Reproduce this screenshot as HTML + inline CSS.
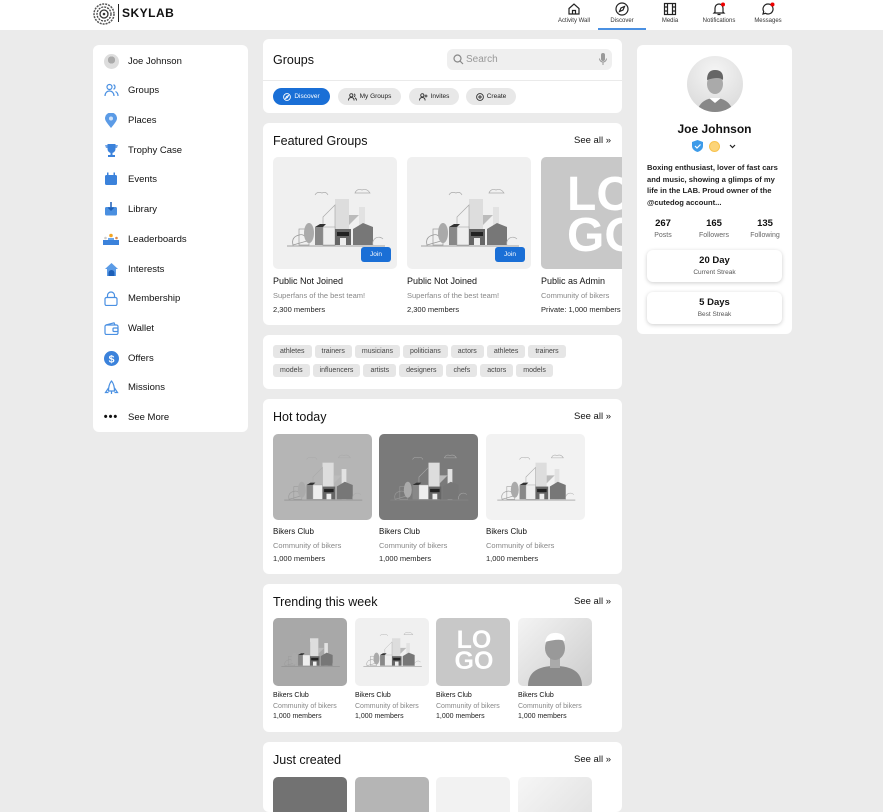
<!DOCTYPE html>
<html><head><meta charset="utf-8"><style>
*{box-sizing:border-box;margin:0;padding:0}
body{width:883px;height:795px;overflow:hidden;background:#ebebeb;font-family:"Liberation Sans",sans-serif;color:#111;position:relative}
.abs{position:absolute}
.card{position:absolute;background:#fff;border-radius:6px}
.hdr{position:absolute;left:0;top:0;width:883px;height:30px;background:#fff}
.nav{position:absolute;top:2px;width:60px;text-align:center;font-size:6px;color:#333}
.nav svg{display:block;margin:0 auto 2px}
.side div.it{position:absolute;left:0;height:20px;display:flex;align-items:center;font-size:9.5px}
.side .ic{width:16px;height:16px;margin-left:10px;margin-right:9px;display:flex;align-items:center;justify-content:center}
.pill{position:absolute;top:88px;height:17px;border-radius:9px;background:#e8e8e8;font-size:6.5px;display:flex;align-items:center;justify-content:center;gap:3px;color:#222}
h2{position:absolute;font-size:12.5px;font-weight:normal;color:#111}
.see{position:absolute;right:11px;font-size:9.5px;color:#111}
.img{position:absolute;border-radius:5px;overflow:hidden}
.t1{position:absolute;font-size:9px}
.t2{position:absolute;font-size:7.5px;color:#888}
.t3{position:absolute;font-size:7.5px;color:#222}
.tag{display:inline-block;height:13px;line-height:13px;padding:0 7px;background:#e6e6e6;border-radius:3px;font-size:7px;color:#444;margin:0 3px 6px 0}
.logo{display:flex;flex-wrap:wrap;color:#fff;font-weight:bold;font-family:"Liberation Sans",sans-serif;line-height:.85}
</style></head><body>

<div class="hdr"></div>
<svg class="abs" style="left:93px;top:3px" width="22" height="22" viewBox="0 0 22 22"><circle cx="11" cy="11" r="10" fill="none" stroke="#555" stroke-width="1.5" stroke-dasharray="2 1"/><circle cx="11" cy="11" r="7" fill="none" stroke="#444" stroke-width="1.3" stroke-dasharray="2 1"/><circle cx="11" cy="11" r="4" fill="none" stroke="#333" stroke-width="1.3"/><circle cx="11" cy="11" r="1.3" fill="#333"/></svg>
<div class="abs" style="left:118px;top:4px;width:1px;height:18px;background:#222"></div>
<div class="abs" style="left:122px;top:6px;font-size:12px;font-weight:bold;letter-spacing:.5px">SKYLAB</div>

<div class="nav" style="left:544px"><svg width="14" height="14" viewBox="0 0 14 14" fill="none" stroke="#222" stroke-width="1.2"><path d="M2 6.5L7 2l5 4.5V12H2z"/><path d="M5.5 12V8.5h3V12"/></svg>Activity Wall</div>
<div class="nav" style="left:592px"><svg width="14" height="14" viewBox="0 0 14 14" fill="none" stroke="#222" stroke-width="1.2"><circle cx="7" cy="7" r="6"/><path d="M9.5 4.5L8 8 4.5 9.5 6 6z"/></svg>Discover</div>
<div class="abs" style="left:598px;top:28px;width:48px;height:2px;background:#4a90e2"></div>
<div class="nav" style="left:640px"><svg width="14" height="14" viewBox="0 0 14 14" fill="none" stroke="#222" stroke-width="1.2"><rect x="1.5" y="1.5" width="11" height="11"/><path d="M4.5 1.5v11M9.5 1.5v11M1.5 5h3M1.5 9h3M9.5 5h3M9.5 9h3"/></svg>Media</div>
<div class="nav" style="left:689px"><svg width="14" height="14" viewBox="0 0 14 14" fill="none" stroke="#222" stroke-width="1.2"><path d="M3 10V6a4 4 0 018 0v4l1 1H2z"/><path d="M5.5 12.5h3"/><circle cx="11" cy="2.5" r="2" fill="#e00" stroke="none"/></svg>Notifications</div>
<div class="nav" style="left:738px"><svg width="14" height="14" viewBox="0 0 14 14" fill="none" stroke="#222" stroke-width="1.2"><path d="M7 2a5 5 0 11-2.5 9.3L2 12l.7-2.5A5 5 0 017 2z"/><circle cx="11.5" cy="2.5" r="2" fill="#e00" stroke="none"/></svg>Messages</div>

<!-- left sidebar -->
<div class="card side" style="left:93px;top:45px;width:155px;height:387px">
<div class="it" style="top:6px"><span class="ic"><span style="width:15px;height:15px;border-radius:50%;background:radial-gradient(circle at 50% 40%,#aaa 30%,#ddd 32%)"></span></span>Joe Johnson</div>
<div class="it" style="top:35px"><span class="ic"><svg width="15" height="14" viewBox="0 0 15 14" fill="none" stroke="#4a90e2" stroke-width="1.2"><circle cx="5.5" cy="4" r="2.5"/><path d="M1 13c0-3 2-5 4.5-5s4.5 2 4.5 5"/><path d="M9.5 1.7a2.5 2.5 0 010 4.6M11.5 8.5c1.5.7 2.5 2.4 2.5 4.5"/></svg></span>Groups</div>
<div class="it" style="top:65px"><span class="ic"><svg width="12" height="15" viewBox="0 0 12 15"><path d="M6 15C2 10 0 7.5 0 5.5a6 6 0 0112 0C12 7.5 10 10 6 15z" fill="#5b9be6"/><circle cx="6" cy="5.5" r="2" fill="#cfe2fa"/></svg></span>Places</div>
<div class="it" style="top:95px"><span class="ic"><svg width="15" height="15" viewBox="0 0 15 15" fill="#3b82db"><path d="M3.5 1h8v5a4 4 0 01-8 0z"/><path d="M1 2h2.5v3H2zM11.5 2H14l-1 3h-1.5z" opacity=".7"/><rect x="6.5" y="9" width="2" height="3"/><rect x="4" y="12" width="7" height="2"/></svg></span>Trophy Case</div>
<div class="it" style="top:124px"><span class="ic"><svg width="14" height="14" viewBox="0 0 14 14"><rect x="1" y="3" width="12" height="10" rx="1.5" fill="#3b82db"/><rect x="3" y="0.5" width="1.5" height="4" fill="#3b82db"/><rect x="9.5" y="0.5" width="1.5" height="4" fill="#3b82db"/></svg></span>Events</div>
<div class="it" style="top:154px"><span class="ic"><svg width="14" height="14" viewBox="0 0 14 14"><rect x="1" y="5" width="12" height="8.5" rx="1.5" fill="#4a8fe0"/><path d="M7 0v8M4.5 5.5L7 8l2.5-2.5" stroke="#1c5fb8" stroke-width="1.5" fill="none"/></svg></span>Library</div>
<div class="it" style="top:184px"><span class="ic"><svg width="16" height="12" viewBox="0 0 16 12"><rect x="0" y="7" width="16" height="5" fill="#3b82db"/><rect x="5" y="5" width="6" height="2" fill="#6aa7ef"/><circle cx="8" cy="2.5" r="1.8" fill="#f5a623"/><circle cx="2.5" cy="5" r="1.3" fill="#ccc"/><circle cx="13.5" cy="5" r="1.3" fill="#e08a4a"/></svg></span>Leaderboards</div>
<div class="it" style="top:214px"><span class="ic"><svg width="15" height="15" viewBox="0 0 15 15"><path d="M7.5 1L1 7h2v7h9V7h2z" fill="#5b9be6"/><path d="M4.5 14v-3a3 3 0 016 0v3z" fill="#1c5fb8"/></svg></span>Interests</div>
<div class="it" style="top:243px"><span class="ic"><svg width="14" height="15" viewBox="0 0 14 15" fill="none" stroke="#4a90e2" stroke-width="1.2"><rect x="1" y="6.5" width="12" height="8" rx="1.5"/><path d="M3.5 6.5V4.5a3.5 3.5 0 017 0v2"/></svg></span>Membership</div>
<div class="it" style="top:273px"><span class="ic"><svg width="15" height="13" viewBox="0 0 15 13" fill="none" stroke="#4a90e2" stroke-width="1.2"><rect x="1" y="3" width="13" height="9.5" rx="1.5"/><path d="M2 3L10 .8 11 3"/><rect x="9" y="6" width="5" height="3.5" rx="1"/></svg></span>Wallet</div>
<div class="it" style="top:303px"><span class="ic"><svg width="15" height="15" viewBox="0 0 15 15"><circle cx="7.5" cy="7.5" r="7.5" fill="#3b82db"/><text x="7.5" y="11.3" text-anchor="middle" font-size="10.5" font-weight="bold" fill="#fff" font-family="Liberation Sans">$</text></svg></span>Offers</div>
<div class="it" style="top:332px"><span class="ic"><svg width="15" height="15" viewBox="0 0 15 15" fill="none" stroke="#4a90e2" stroke-width="1.2"><path d="M7.5 1C5 4 4.5 7 4.5 11h6c0-4-.5-7-3-10z"/><path d="M4.5 8L1.5 12.5h3M10.5 8l3 4.5h-3M7.5 11v3"/></svg></span>Missions</div>
<div class="it" style="top:362px"><span class="ic" style="font-weight:bold;font-size:11px;letter-spacing:1px">•••</span>See More</div>
</div>

<!-- groups header card -->
<div class="card" style="left:263px;top:39px;width:359px;height:74px">
<div class="abs" style="left:10px;top:14px;font-size:12.5px">Groups</div>
<div class="abs" style="left:184px;top:10px;width:165px;height:21px;background:#efefef;border-radius:6px"></div>
<svg class="abs" style="left:190px;top:15px" width="11" height="11" viewBox="0 0 11 11" fill="none" stroke="#888" stroke-width="1.2"><circle cx="4.5" cy="4.5" r="3.5"/><path d="M7 7l3 3"/></svg>
<div class="abs" style="left:203px;top:15px;font-size:10px;color:#999">Search</div>
<svg class="abs" style="left:336px;top:14px" width="8" height="13" viewBox="0 0 8 13" fill="#999"><rect x="2" y="0" width="4" height="8" rx="2"/><path d="M.5 5.5a3.5 3.5 0 007 0" stroke="#999" fill="none"/><rect x="3.5" y="9" width="1" height="3"/></svg>
<div class="abs" style="left:0;top:41px;width:359px;height:1px;background:#eaeaea"></div>
</div>
<div class="pill" style="left:273px;width:57px;background:#1a6fd6;color:#fff"><svg width="8" height="8" viewBox="0 0 8 8" fill="none" stroke="#fff" stroke-width=".9"><circle cx="4" cy="4" r="3.4"/><path d="M5.5 2.5L4.5 4.5 2.5 5.5 3.5 3.5z"/></svg>Discover</div>
<div class="pill" style="left:338px;width:63px"><svg width="9" height="8" viewBox="0 0 9 8" fill="none" stroke="#333" stroke-width=".9"><circle cx="3.3" cy="2.3" r="1.6"/><path d="M.5 7.5c0-2 1.2-3 2.8-3s2.8 1 2.8 3M6 .8a1.6 1.6 0 010 3M7 4.8c1 .5 1.5 1.5 1.5 2.7"/></svg>My Groups</div>
<div class="pill" style="left:409px;width:50px"><svg width="9" height="8" viewBox="0 0 9 8" fill="none" stroke="#333" stroke-width=".9"><circle cx="3.3" cy="2.3" r="1.6"/><path d="M.5 7.5c0-2 1.2-3 2.8-3s2.8 1 2.8 3M7 1.5v3M5.5 3h3"/></svg>Invites</div>
<div class="pill" style="left:466px;width:50px"><svg width="8" height="8" viewBox="0 0 8 8" fill="none" stroke="#333" stroke-width=".9"><circle cx="4" cy="4" r="3.4"/><path d="M4 2v4M2 4h4"/></svg>Create</div>

<svg width="0" height="0" style="position:absolute"><defs>
<g id="city">
<path d="M20 88 Q18 80 26 78 Q32 76 34 84 Z" fill="none" stroke="#999" stroke-width=".8"/>
<rect x="62" y="42" width="14" height="46" fill="#ddd"/>
<path d="M50 60 L62 48 V88 H50Z" fill="none" stroke="#aaa" stroke-width=".7"/>
<rect x="86" y="50" width="6" height="38" fill="#e2e2e2"/>
<path d="M76 58h10l-10 10z" fill="#bbb"/>
<rect x="26" y="72" width="10" height="16" fill="none" stroke="#999" stroke-width=".7"/>
<ellipse cx="36" cy="76" rx="5" ry="10" fill="#aaa"/>
<rect x="42" y="70" width="8" height="18" fill="#888"/>
<path d="M42 70l5-3h6l-3 3z" fill="#333"/>
<rect x="50" y="70" width="12" height="18" fill="#eee" stroke="#999" stroke-width=".5"/>
<rect x="62" y="72" width="16" height="16" fill="#666"/>
<rect x="64" y="75" width="12" height="4" fill="#222"/>
<rect x="67" y="81" width="6" height="7" fill="#eee"/>
<path d="M80 88V72l10-6 10 4v18z" fill="#777"/>
<path d="M100 88a6 6 0 0110-6" fill="none" stroke="#aaa" stroke-width=".7"/>
<path d="M42 38q2-4 7-2q4-2 6 2" fill="none" stroke="#aaa" stroke-width=".7"/>
<path d="M82 36q2-5 7-3q5-2 8 3z" fill="none" stroke="#aaa" stroke-width=".7"/>
<line x1="14" y1="89" x2="112" y2="89" stroke="#888" stroke-width=".8"/>
</g></defs></svg>

<!-- featured -->
<div class="card" style="left:263px;top:123px;width:359px;height:202px;overflow:hidden">
<h2 style="left:10px;top:11px">Featured Groups</h2><div class="see" style="top:12px">See all »</div>
<div class="img" style="left:10px;top:34px;width:124px;height:112px;background:#f0f0f0"><svg width="124" height="112" viewBox="0 0 124 112"><use href="#city"/></svg><div class="abs" style="left:88px;top:90px;width:30px;height:15px;background:#1a6fd6;border-radius:3px;color:#fff;font-size:6.5px;text-align:center;line-height:15px">Join</div></div>
<div class="img" style="left:144px;top:34px;width:124px;height:112px;background:#f0f0f0"><svg width="124" height="112" viewBox="0 0 124 112"><use href="#city"/></svg><div class="abs" style="left:88px;top:90px;width:30px;height:15px;background:#1a6fd6;border-radius:3px;color:#fff;font-size:6.5px;text-align:center;line-height:15px">Join</div></div>
<div class="img" style="left:278px;top:34px;width:124px;height:112px;background:#c8c8c8"><div class="abs logo" style="left:26px;top:18px;width:110px;font-size:48px">LO<br>GO</div></div>
<div class="t1" style="left:10px;top:153px">Public Not Joined</div><div class="t2" style="left:10px;top:168px">Superfans of the best team!</div><div class="t3" style="left:10px;top:182px">2,300 members</div>
<div class="t1" style="left:144px;top:153px">Public Not Joined</div><div class="t2" style="left:144px;top:168px">Superfans of the best team!</div><div class="t3" style="left:144px;top:182px">2,300 members</div>
<div class="t1" style="left:278px;top:153px;white-space:nowrap">Public as Admin</div><div class="t2" style="left:278px;top:168px;white-space:nowrap">Community of bikers</div><div class="t3" style="left:278px;top:182px;white-space:nowrap">Private: 1,000 members</div>
</div>

<!-- tags -->
<div class="card" style="left:263px;top:335px;width:359px;height:54px;padding:10px 0 0 10px;line-height:0">
<span class="tag">athletes</span><span class="tag">trainers</span><span class="tag">musicians</span><span class="tag">politicians</span><span class="tag">actors</span><span class="tag">athletes</span><span class="tag">trainers</span><br>
<span class="tag">models</span><span class="tag">influencers</span><span class="tag">artists</span><span class="tag">designers</span><span class="tag">chefs</span><span class="tag">actors</span><span class="tag">models</span>
</div>

<!-- hot today -->
<div class="card" style="left:263px;top:399px;width:359px;height:175px">
<h2 style="left:10px;top:11px">Hot today</h2><div class="see" style="top:12px">See all »</div>
<div class="img" style="left:10px;top:35px;width:99px;height:86px;background:#b5b5b5"><svg width="99" height="86" viewBox="0 6 124 108"><use href="#city"/></svg></div>
<div class="img" style="left:116px;top:35px;width:99px;height:86px;background:#7a7a7a"><svg width="99" height="86" viewBox="0 6 124 108"><use href="#city"/></svg></div>
<div class="img" style="left:223px;top:35px;width:99px;height:86px;background:#f2f2f2"><svg width="99" height="86" viewBox="0 6 124 108"><use href="#city"/></svg></div>
<div class="t1" style="left:10px;top:128px;font-size:8px">Bikers Club</div><div class="t2" style="left:10px;top:142px">Community of bikers</div><div class="t3" style="left:10px;top:155px">1,000 members</div>
<div class="t1" style="left:116px;top:128px;font-size:8px">Bikers Club</div><div class="t2" style="left:116px;top:142px">Community of bikers</div><div class="t3" style="left:116px;top:155px">1,000 members</div>
<div class="t1" style="left:223px;top:128px;font-size:8px">Bikers Club</div><div class="t2" style="left:223px;top:142px">Community of bikers</div><div class="t3" style="left:223px;top:155px">1,000 members</div>
</div>

<!-- trending -->
<div class="card" style="left:263px;top:584px;width:359px;height:148px">
<h2 style="left:10px;top:11px">Trending this week</h2><div class="see" style="top:12px">See all »</div>
<div class="img" style="left:10px;top:34px;width:74px;height:68px;background:#a8a8a8"><svg width="74" height="68" viewBox="0 8 124 114"><use href="#city"/></svg></div>
<div class="img" style="left:92px;top:34px;width:74px;height:68px;background:#f0f0f0"><svg width="74" height="68" viewBox="0 8 124 114"><use href="#city"/></svg></div>
<div class="img" style="left:173px;top:34px;width:74px;height:68px;background:#c8c8c8"><div class="abs logo" style="left:16px;top:12px;width:44px;font-size:25px;text-align:center;display:block">LO<br>GO</div></div>
<div class="img" style="left:255px;top:34px;width:74px;height:68px;background:linear-gradient(135deg,#f4f4f4,#ccc)"><svg width="74" height="68" viewBox="0 0 74 68"><path d="M10 68c0-14 10-20 27-20s27 6 27 20z" fill="#8a8a8a"/><rect x="32" y="38" width="10" height="12" fill="#aaa"/><ellipse cx="37" cy="30" rx="10" ry="12" fill="#999"/><path d="M27 24q2-10 12-9q8 1 8 8q-6-3-20 1z" fill="#fff"/></svg></div>
<div class="t3" style="left:10px;top:108px;font-size:7px;color:#111">Bikers Club</div><div class="t2" style="left:10px;top:119px;font-size:7px">Community of bikers</div><div class="t3" style="left:10px;top:129px;font-size:7px">1,000 members</div>
<div class="t3" style="left:92px;top:108px;font-size:7px;color:#111">Bikers Club</div><div class="t2" style="left:92px;top:119px;font-size:7px">Community of bikers</div><div class="t3" style="left:92px;top:129px;font-size:7px">1,000 members</div>
<div class="t3" style="left:173px;top:108px;font-size:7px;color:#111">Bikers Club</div><div class="t2" style="left:173px;top:119px;font-size:7px">Community of bikers</div><div class="t3" style="left:173px;top:129px;font-size:7px">1,000 members</div>
<div class="t3" style="left:255px;top:108px;font-size:7px;color:#111">Bikers Club</div><div class="t2" style="left:255px;top:119px;font-size:7px">Community of bikers</div><div class="t3" style="left:255px;top:129px;font-size:7px">1,000 members</div>
</div>

<!-- just created -->
<div class="card" style="left:263px;top:742px;width:359px;height:70px;overflow:hidden">
<h2 style="left:10px;top:11px">Just created</h2><div class="see" style="top:12px">See all »</div>
<div class="img" style="left:10px;top:35px;width:74px;height:40px;background:#727272"></div>
<div class="img" style="left:92px;top:35px;width:74px;height:40px;background:#b5b5b5"></div>
<div class="img" style="left:173px;top:35px;width:74px;height:40px;background:#f2f2f2"></div>
<div class="img" style="left:255px;top:35px;width:74px;height:40px;background:linear-gradient(135deg,#f6f6f6,#e2e2e2)"></div>
</div>

<!-- profile -->
<div class="card" style="left:637px;top:45px;width:155px;height:289px">
<div class="abs" style="left:50px;top:11px;width:56px;height:56px;border-radius:50%;background:radial-gradient(circle at 50% 30%,#f5f5f5,#d6d6d6);overflow:hidden"><svg width="56" height="56" viewBox="0 0 56 56"><path d="M10 56c2-10 10-14 18-14s16 4 18 14z" fill="#888"/><path d="M22 42l6 5 6-5z" fill="#fff"/><ellipse cx="28" cy="28" rx="8" ry="10" fill="#aaa"/><path d="M20 24q0-10 8-10q9 0 8 10q-4-4-16 0z" fill="#666"/></svg></div>
<div class="abs" style="left:0;width:155px;top:77px;text-align:center;font-size:12px;font-weight:bold">Joe Johnson</div>
<svg class="abs" style="left:55px;top:95px" width="11" height="12" viewBox="0 0 11 12"><path d="M5.5 0L11 2v4c0 3-2.5 5-5.5 6C2.5 11 0 9 0 6V2z" fill="#3d9be9"/><path d="M3 6l2 2 3.5-3.5" stroke="#fff" fill="none" stroke-width="1.2"/></svg>
<div class="abs" style="left:72px;top:96px;width:11px;height:11px;border-radius:50%;background:#fcd478;border:1px solid #f7c24e"></div>
<svg class="abs" style="left:92px;top:99px" width="7" height="5" viewBox="0 0 7 5"><path d="M1 1l2.5 2.5L6 1" stroke="#222" fill="none" stroke-width="1.2"/></svg>
<div class="abs" style="left:10px;top:117px;width:140px;font-size:7.6px;font-weight:bold;line-height:11.5px;color:#222">Boxing enthusiast, lover of fast cars and music, showing a glimps of my life in the LAB. Proud owner of the @cutedog account...</div>
<div class="abs" style="left:8px;top:173px;width:36px;text-align:center;font-size:9.5px;font-weight:bold">267<div style="font-size:7px;font-weight:normal;color:#666;margin-top:3px">Posts</div></div>
<div class="abs" style="left:56px;top:173px;width:42px;text-align:center;font-size:9.5px;font-weight:bold">165<div style="font-size:7px;font-weight:normal;color:#666;margin-top:3px">Followers</div></div>
<div class="abs" style="left:108px;top:173px;width:40px;text-align:center;font-size:9.5px;font-weight:bold">135<div style="font-size:7px;font-weight:normal;color:#666;margin-top:3px">Following</div></div>
<div class="abs" style="left:10px;top:205px;width:135px;height:32px;border-radius:6px;box-shadow:0 1px 4px rgba(0,0,0,.2);text-align:center;padding-top:5px;font-size:9.5px;font-weight:bold">20 Day<div style="font-size:6.5px;font-weight:normal;color:#555;margin-top:3px">Current Streak</div></div>
<div class="abs" style="left:10px;top:247px;width:135px;height:32px;border-radius:6px;box-shadow:0 1px 4px rgba(0,0,0,.2);text-align:center;padding-top:5px;font-size:9.5px;font-weight:bold">5 Days<div style="font-size:6.5px;font-weight:normal;color:#555;margin-top:3px">Best Streak</div></div>
</div>

</body></html>
